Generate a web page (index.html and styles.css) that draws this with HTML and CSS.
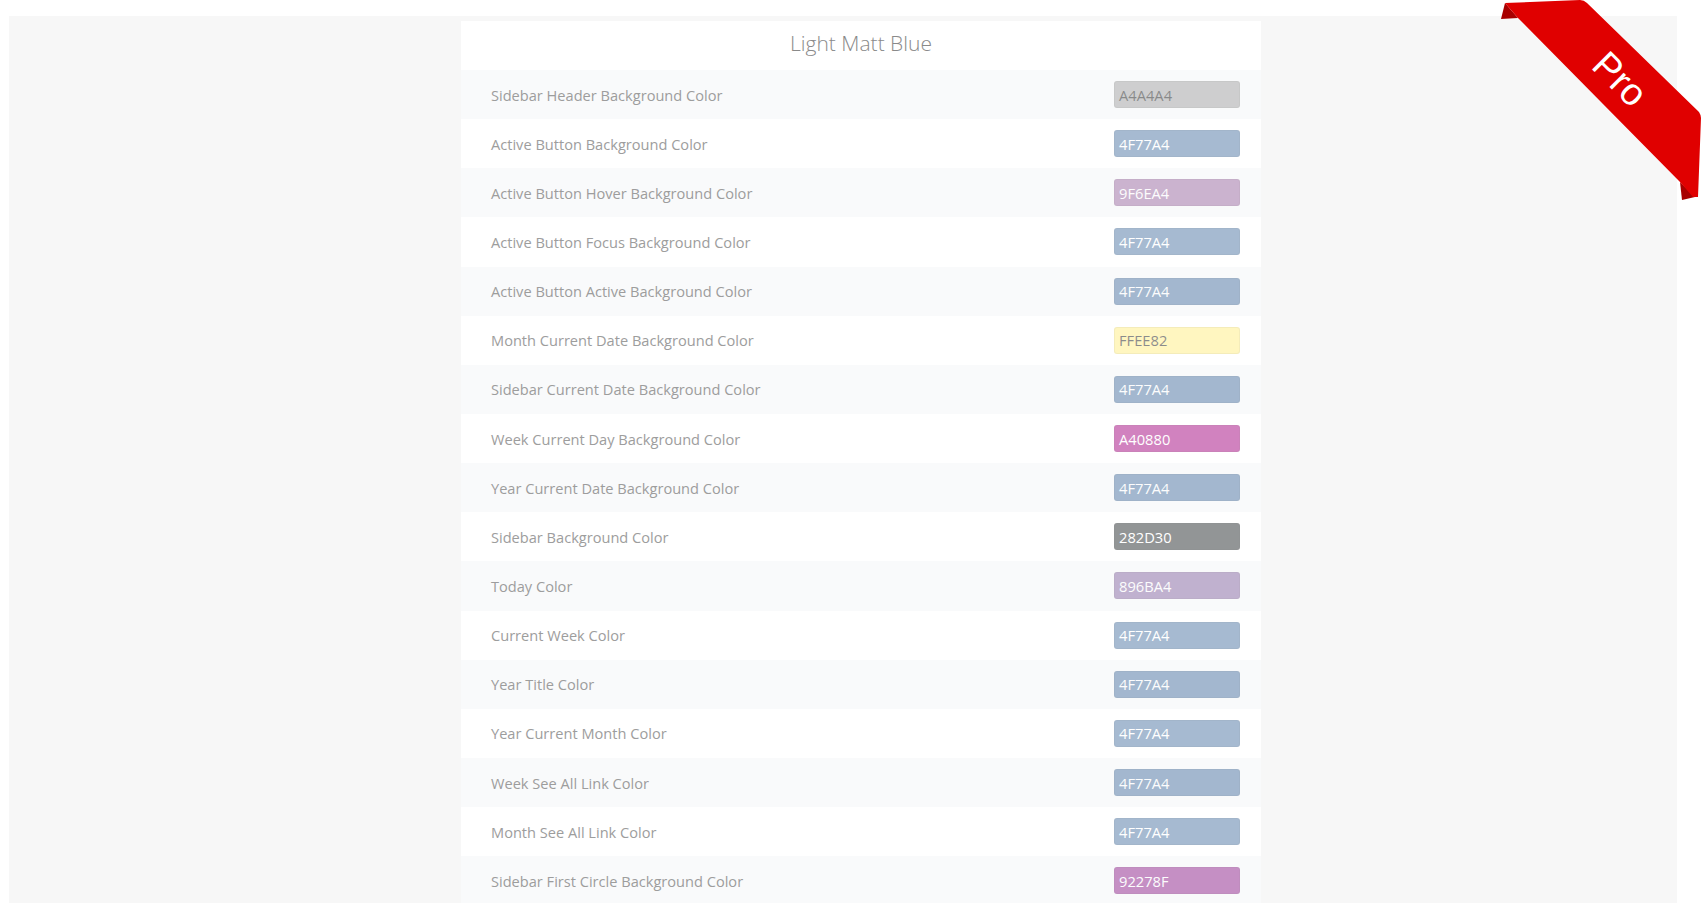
FILE: index.html
```html
<!DOCTYPE html>
<html lang="en">
<head>
<meta charset="utf-8">
<title>Light Matt Blue</title>
<link rel="stylesheet" href="styles.css">
</head>
<body>
<div class="page">
  <div class="panel">
    <div class="card">
      <div class="card-title">Light Matt Blue</div>
      <div class="row"><span class="label">Sidebar Header Background Color</span><span class="swatch dark-text" style="background:#A4A4A4">A4A4A4</span></div>
      <div class="row"><span class="label">Active Button Background Color</span><span class="swatch" style="background:#4F77A4">4F77A4</span></div>
      <div class="row"><span class="label">Active Button Hover Background Color</span><span class="swatch" style="background:#9F6EA4">9F6EA4</span></div>
      <div class="row"><span class="label">Active Button Focus Background Color</span><span class="swatch" style="background:#4F77A4">4F77A4</span></div>
      <div class="row"><span class="label">Active Button Active Background Color</span><span class="swatch" style="background:#4F77A4">4F77A4</span></div>
      <div class="row"><span class="label">Month Current Date Background Color</span><span class="swatch dark-text" style="background:#FFEE82">FFEE82</span></div>
      <div class="row"><span class="label">Sidebar Current Date Background Color</span><span class="swatch" style="background:#4F77A4">4F77A4</span></div>
      <div class="row"><span class="label">Week Current Day Background Color</span><span class="swatch" style="background:#A40880">A40880</span></div>
      <div class="row"><span class="label">Year Current Date Background Color</span><span class="swatch" style="background:#4F77A4">4F77A4</span></div>
      <div class="row"><span class="label">Sidebar Background Color</span><span class="swatch" style="background:#282D30">282D30</span></div>
      <div class="row"><span class="label">Today Color</span><span class="swatch" style="background:#896BA4">896BA4</span></div>
      <div class="row"><span class="label">Current Week Color</span><span class="swatch" style="background:#4F77A4">4F77A4</span></div>
      <div class="row"><span class="label">Year Title Color</span><span class="swatch" style="background:#4F77A4">4F77A4</span></div>
      <div class="row"><span class="label">Year Current Month Color</span><span class="swatch" style="background:#4F77A4">4F77A4</span></div>
      <div class="row"><span class="label">Week See All Link Color</span><span class="swatch" style="background:#4F77A4">4F77A4</span></div>
      <div class="row"><span class="label">Month See All Link Color</span><span class="swatch" style="background:#4F77A4">4F77A4</span></div>
      <div class="row"><span class="label">Sidebar First Circle Background Color</span><span class="swatch" style="background:#92278F">92278F</span></div>
    </div>
  </div>
</div>
<svg class="ribbon" width="221" height="210" viewBox="0 0 221 210">
  <polygon fill="#a80000" points="21,19 25,3 38,18"/>
  <polygon fill="#a80000" points="200,182 202,200 215,197"/>
  <path fill="#e00000" d="M25,3 L100,0 Q104,0 107,3 L219,112 Q221,115 221,118 L218,197 L213,197 L200,182 L38,18 Z"/>
  <text class="ribbon-text" x="0" y="0" transform="translate(140 79) rotate(45)" text-anchor="middle" dominant-baseline="central">Pro</text>
</svg>
</body>
</html>
```

FILE: styles.css
```css
html, body {
  margin: 0;
  padding: 0;
  background: #ffffff;
}

body {
  position: relative;
  width: 1701px;
  height: 910px;
  overflow: hidden;
  font-family: "Open Sans", "Noto Sans", "Liberation Sans", sans-serif;
}

.page {
  padding: 16px 24px 7px 9px;
}

.panel {
  background: #f7f7f7;
  height: 887px;
  overflow: hidden;
  padding-top: 5px;
  box-sizing: border-box;
}

.card {
  width: 800px;
  margin-left: 452px;
  background: #ffffff;
}

.card-title {
  height: 49px;
  display: flex;
  align-items: center;
  justify-content: center;
  font-size: 21px;
  font-weight: 300;
  color: #8a8a8a;
  padding-bottom: 6px;
  box-sizing: border-box;
}

.row {
  height: 49.15px;
  display: flex;
  align-items: center;
  justify-content: space-between;
  padding: 0 21px 0 30px;
  box-sizing: border-box;
  background: #ffffff;
}

.row:nth-child(even) {
  background: #f9fafb;
}

.label {
  font-size: 14.6px;
  color: #9d9d9d;
}

.swatch {
  width: 126px;
  height: 27px;
  box-sizing: border-box;
  border: 1px solid rgba(0, 0, 0, 0.08);
  border-radius: 3px;
  padding: 0 4px;
  display: flex;
  align-items: center;
  font-size: 14.7px;
  color: #ffffff;
  opacity: 0.5;
}

.swatch.dark-text {
  color: #1a1a1a;
}

.ribbon {
  position: absolute;
  top: 0;
  right: 0;
}

.ribbon-text {
  font-family: "Liberation Sans", Arial, sans-serif;
  font-size: 38px;
  fill: #ffffff;
}
```
